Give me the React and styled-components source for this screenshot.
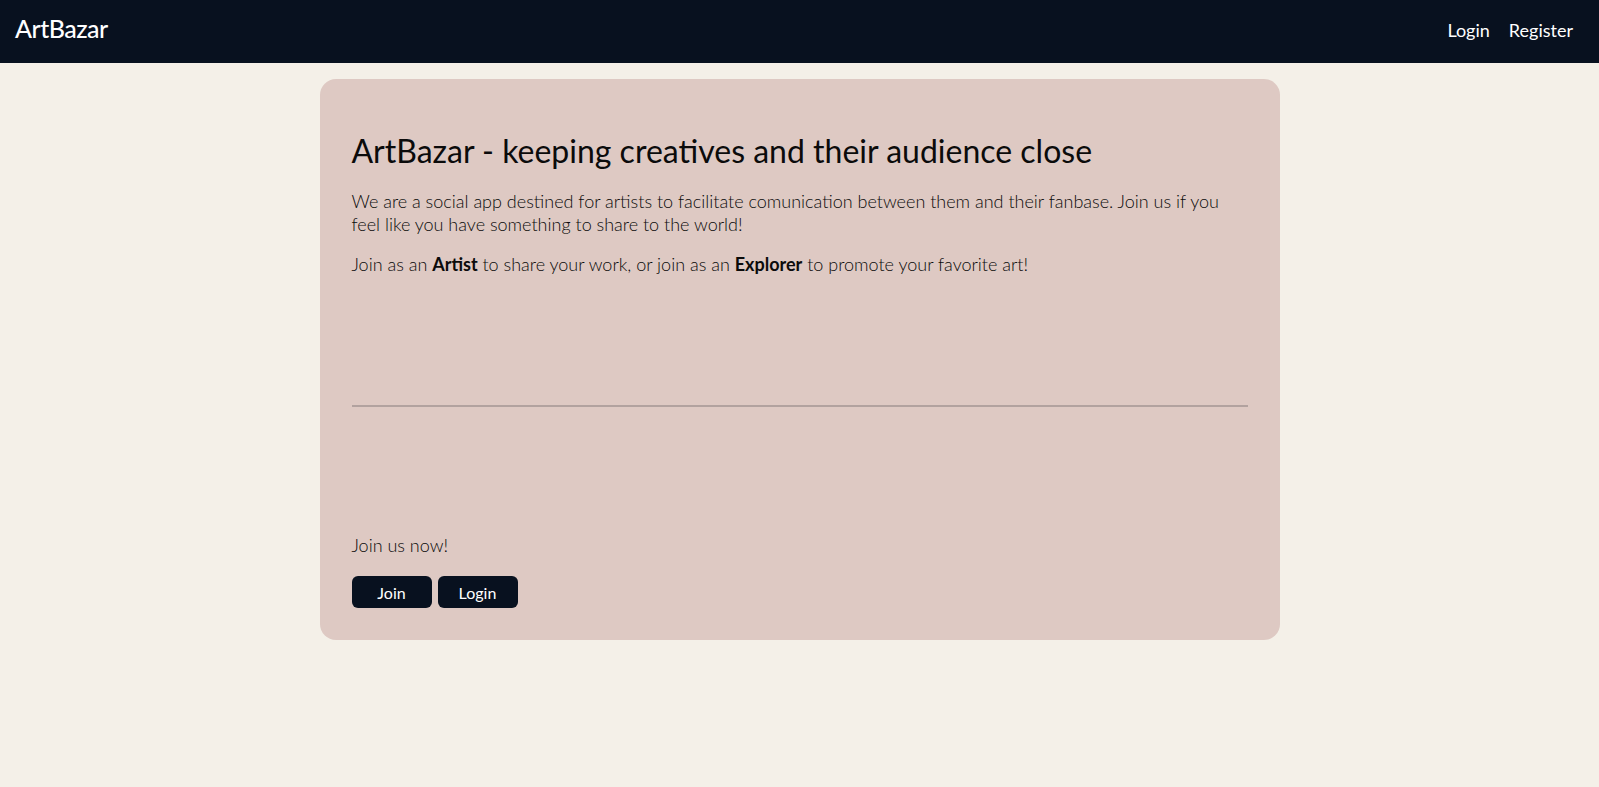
import styled, { createGlobalStyle } from 'styled-components';

const GlobalStyle = createGlobalStyle`
  body {
    margin: 0;
    background-color: #f4f0e8;
    font-family: 'Lato', 'Open Sans', sans-serif;
    color: #0b0b0b;
  }
`;

const Navbar = styled.nav`
  height: 63px;
  display: flex;
  align-items: center;
  justify-content: space-between;
  padding: 0 26px 0 15px;
  background-color: #08111f;
  box-sizing: border-box;
`;

const Brand = styled.a`
  font-size: 25px;
  font-weight: 500;
  letter-spacing: -0.5px;
  color: #ffffff;
  text-decoration: none;
  margin-top: -8px;
`;

const NavLinks = styled.div`
  display: flex;
  gap: 19px;
  margin-top: -3px;
`;

const NavItem = styled.a`
  font-size: 18px;
  font-weight: 400;
  color: #ffffff;
  text-decoration: none;
`;

const Card = styled.main`
  max-width: 960px;
  margin: 16px auto 0;
  padding: 32px;
  box-sizing: border-box;
  background-color: #dec9c3;
  border-radius: 16px;
  display: flex;
  flex-direction: column;
`;

const Title = styled.h2`
  margin: 21px 0 20px;
  font-size: 32px;
  font-weight: 400;
  line-height: 1.2;
`;

const Text = styled.p`
  margin: 0 0 ${(p) => (p.$tight ? '19px' : '17px')};
  font-size: 18px;
  font-weight: 300;
  line-height: 23px;
`;

const Strong = styled.b`
  font-weight: 700;
`;

const Divider = styled.hr`
  width: 100%;
  margin: 112px 0 127px;
  border: 0;
  border-top: 2px solid #b2a29f;
`;

const Buttons = styled.div`
  display: flex;
  gap: 6px;
`;

const Button = styled.button`
  width: 80px;
  height: 32px;
  border: none;
  border-radius: 6px;
  background-color: #08111f;
  color: #ffffff;
  font-family: inherit;
  font-size: 16px;
  cursor: pointer;
`;

export default function App() {
  return (
    <>
      <GlobalStyle />
      <Navbar>
        <Brand href="#">ArtBazar</Brand>
        <NavLinks>
          <NavItem href="#">Login</NavItem>
          <NavItem href="#">Register</NavItem>
        </NavLinks>
      </Navbar>
      <Card>
        <Title>ArtBazar - keeping creatives and their audience close</Title>
        <Text>
          We are a social app destined for artists to facilitate comunication between them and
          their fanbase. Join us if you feel like you have something to share to the world!
        </Text>
        <Text>
          Join as an <Strong>Artist</Strong> to share your work, or join as an{' '}
          <Strong>Explorer</Strong> to promote your favorite art!
        </Text>
        <Divider />
        <Text $tight>Join us now!</Text>
        <Buttons>
          <Button>Join</Button>
          <Button>Login</Button>
        </Buttons>
      </Card>
    </>
  );
}
